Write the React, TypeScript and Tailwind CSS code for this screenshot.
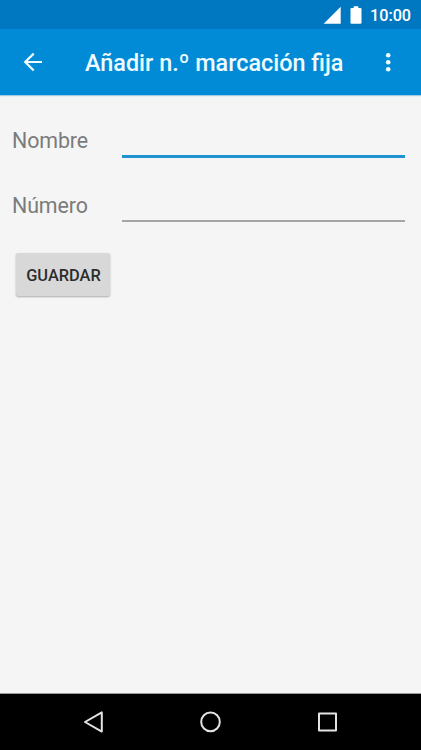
import React from "react";

function StatusBar() {
  return (
    <div className="flex h-[29px] shrink-0 items-center justify-end bg-[#0078c1] pr-[11px] text-white">
      <svg className="mr-[9px]" width="18" height="18" viewBox="0 0 18 18" fill="currentColor">
        <path d="M17.7 0.8V17.8H0.7Z" />
      </svg>
      <svg className="mr-[8px]" width="12" height="18" viewBox="0 0 12 18" fill="currentColor">
        <path d="M3.7 0.3h4.6v1.8h2.2a1 1 0 0 1 1 1v13.7a1 1 0 0 1-1 1h-9a1 1 0 0 1-1-1V3.1a1 1 0 0 1 1-1h2.2z" />
      </svg>
      <span className="w-[40px] pt-[2px] text-[16.2px] leading-5 font-medium whitespace-nowrap">10:00</span>
    </div>
  );
}

function AppBar() {
  return (
    <header className="flex h-[66px] shrink-0 items-center bg-[#018bd7] text-[#effcff] shadow-[0_1px_1px_rgba(0,130,190,0.35)]">
      <button className="ml-[20px] flex size-6 items-center justify-center" aria-label="Atrás">
        <svg width="24" height="24" viewBox="0 0 24 24" fill="none" stroke="currentColor" strokeWidth="2.2">
          <path d="M22 12H5M13.7 3.6L5.2 12l8.5 8.5" />
        </svg>
      </button>
      <h1 className="ml-[41px] flex-1 pt-[2px] text-[23.4px] leading-7 font-medium whitespace-nowrap">
        Añadir n.º marcación fija
      </h1>
      <button className="mr-[21px] flex size-6 items-center justify-center" aria-label="Más opciones">
        <svg width="24" height="24" viewBox="0 0 24 24" fill="currentColor">
          <circle cx="12.2" cy="5.2" r="2.3" />
          <circle cx="12.2" cy="12.2" r="2.3" />
          <circle cx="12.2" cy="19.2" r="2.3" />
        </svg>
      </button>
    </header>
  );
}

function Field({ label, active }: { label: string; active?: boolean }) {
  return (
    <label className="flex h-[65px] items-start">
      <span className="w-[110px] pt-[2px] text-[21.4px] leading-7 tracking-[-0.1px] text-[#7b7b7b]">{label}</span>
      <input
        className={
          active
            ? "h-[33px] min-w-0 flex-1 border-b-[3px] border-[#1f93d0] bg-transparent outline-none"
            : "h-[32px] min-w-0 flex-1 border-b-2 border-[#a5a5a5] bg-transparent outline-none"
        }
      />
    </label>
  );
}

export default function App() {
  return (
    <div className="flex h-[750px] w-[421px] flex-col overflow-hidden bg-[#f5f5f5] font-[Roboto,sans-serif]">
      <StatusBar />
      <AppBar />
      <main className="flex flex-1 flex-col border-b border-[#9c9c9c] pt-[30px] pr-[16px] pl-[12px]">
        <Field label="Nombre" active />
        <Field label="Número" />
        <button className="mt-[-2px] ml-[4px] h-[43px] w-[94px] rounded-[2px] bg-[#d8d8d8] pt-[3px] pl-px text-[16.4px] font-medium text-[#2c2c2c] shadow-[0_1px_2px_rgba(0,0,0,0.3)]">
          GUARDAR
        </button>
      </main>
      <nav className="flex h-[56px] shrink-0 items-center justify-center gap-[93px] bg-black pr-px text-[#e3e3e3]">
        <svg width="24" height="24" viewBox="0 0 24 24" fill="none" stroke="currentColor" strokeWidth="2" strokeLinejoin="round">
          <path d="M20.8 2.4v19.2L4 12z" />
        </svg>
        <svg width="24" height="24" viewBox="0 0 24 24" fill="none" stroke="currentColor" strokeWidth="2">
          <circle cx="12.5" cy="11.9" r="9.3" />
        </svg>
        <svg width="24" height="24" viewBox="0 0 24 24" fill="none" stroke="currentColor" strokeWidth="2" strokeLinejoin="round">
          <rect x="4" y="3.5" width="17" height="17" />
        </svg>
      </nav>
    </div>
  );
}
